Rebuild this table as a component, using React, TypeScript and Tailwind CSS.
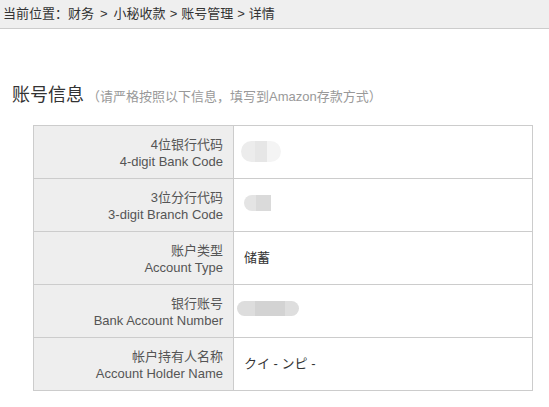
import React from "react";

const font = { fontFamily: '"Liberation Sans", Arial, "Noto Sans CJK SC", sans-serif' };

type Row = { zh: string; en: string; value: React.ReactNode };

const rows: Row[] = [
  {
    zh: "4位银行代码",
    en: "4-digit Bank Code",
    value: (
      <div className="flex ml-[-3px] mt-[-1px] h-[21px] w-[40px] rounded-full overflow-hidden blur-[0.6px]">
        <div className="w-[14px] bg-[#ececec]" />
        <div className="w-[12px] bg-[#e6e6e6]" />
        <div className="flex-1 bg-[#f4f4f4]" />
      </div>
    ),
  },
  {
    zh: "3位分行代码",
    en: "3-digit Branch Code",
    value: (
      <div className="flex mt-[-5px] h-[16px] w-[27px] rounded-l-full rounded-r-[4px] overflow-hidden blur-[0.5px]">
        <div className="w-[12px] bg-[#e4e4e4]" />
        <div className="flex-1 bg-[#dadada]" />
      </div>
    ),
  },
  { zh: "账户类型", en: "Account Type", value: <span>储蓄</span> },
  {
    zh: "银行账号",
    en: "Bank Account Number",
    value: (
      <div className="flex ml-[-7px] mt-[-6px] h-[15px] w-[62px] rounded-full overflow-hidden blur-[0.5px]">
        <div className="w-[18px] bg-[#dddddd]" />
        <div className="w-[30px] bg-[#d3d3d3]" />
        <div className="flex-1 bg-[#dedede]" />
      </div>
    ),
  },
  { zh: "帐户持有人名称", en: "Account Holder Name", value: <span>クイ - ンピ -</span> },
];

export default function App() {
  return (
    <div className="w-[549px] h-[407px] bg-white text-[#333]" style={font}>
      <div className="h-[29px] bg-[#efefef] border-b border-[#cccccc] pl-[3px] flex items-center text-[13px] leading-[28px]">
        <span>当前位置：财务</span>
        <span className="mx-[6px]">&gt;</span>
        <span>小秘收款</span>
        <span className="mx-[4px]">&gt;</span>
        <span>账号管理</span>
        <span className="mx-[4px]">&gt;</span>
        <span>详情</span>
      </div>

      <div className="mt-[54px] ml-[12px] flex items-baseline">
        <span className="text-[18px] leading-[24px] text-[#333]">账号信息</span>
        <span className="ml-[3px] text-[13px] text-[#999]">（请严格按照以下信息，填写到Amazon存款方式）</span>
      </div>

      <div className="mt-[18px] ml-[33px] w-[500px] border-l border-t border-[#cccccc]">
        {rows.map((r) => (
          <div key={r.en} className="flex h-[53px]">
            <div className="w-[200px] bg-[#eeeeee] border-r border-b border-[#cccccc] pr-[10px] flex flex-col justify-center items-end text-[#555] leading-[17px] pt-[1px] text-[13px]">
              <span>{r.zh}</span>
              <span>{r.en}</span>
            </div>
            <div className="flex-1 border-r border-b border-[#cccccc] pl-[10px] flex items-center text-[13px] text-[#333]">
              {r.value}
            </div>
          </div>
        ))}
      </div>
    </div>
  );
}
